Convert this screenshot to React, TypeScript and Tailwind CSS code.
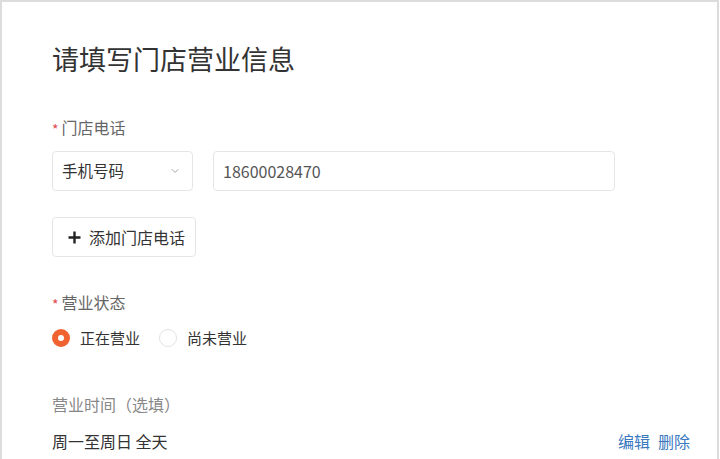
import { ChevronDown } from "lucide-react";

const font = { fontFamily: '"Noto Sans CJK SC", "Noto Sans", sans-serif' };

function Label({ text, required }: { text: string; required?: boolean }) {
  return (
    <div className="flex items-center text-[16px] leading-[24px] text-[#666]">
      {required && <span className="relative top-[2px] mr-[3px] text-[14px] text-[#e5484d]">*</span>}
      {text}
    </div>
  );
}

function Radio({ checked, label }: { checked?: boolean; label: string }) {
  return (
    <label className="flex items-center gap-[10px] text-[15px] leading-[24px] text-[#333]">
      <span
        className={`inline-block h-[18px] w-[18px] rounded-full ${
          checked ? "border-[6px] border-[#f0622f] bg-white" : "border border-[#e3e3e3] bg-white"
        }`}
      />
      {label}
    </label>
  );
}

export default function App() {
  return (
    <div className="min-h-[459px] w-[720px] bg-white" style={font}>
      <div className="min-h-[459px] w-[719px] border-x-2 border-t-2 border-[#dcdcdc] pl-[50px] pt-[39px]">
        <h1 className="text-[27px] font-normal leading-[36px] text-[#333]">请填写门店营业信息</h1>

        {/* Store phone */}
        <div className="mt-[38px]">
          <Label text="门店电话" required />
        </div>
        <div className="mt-[12px] flex gap-[20px]">
          <div className="flex h-[40px] w-[141px] items-center justify-between rounded-[4px] border border-[#e6e6e6] pl-[9px] pr-[11px] text-[15.5px] text-[#333]">
            手机号码
            <ChevronDown size={12} strokeWidth={1.5} className="text-[#888]" />
          </div>
          <div className="flex h-[40px] w-[402px] items-center rounded-[4px] border border-[#e6e6e6] px-[9px] text-[16px] text-[#555]">
            18600028470
          </div>
        </div>
        <button
          type="button"
          className="mt-[26px] flex h-[40px] w-[144px] items-center gap-[8px] rounded-[4px] border border-[#e6e6e6] pl-[15px] text-[16px] text-[#333]"
        >
          <svg width="13" height="13" viewBox="0 0 13 13">
            <path d="M6.5 0.5v12M0.5 6.5h12" stroke="#222" strokeWidth="2.4" />
          </svg>
          添加门店电话
        </button>

        {/* Business status */}
        <div className="mt-[33px]">
          <Label text="营业状态" required />
        </div>
        <div className="mt-[12px] flex items-center gap-[19px]">
          <Radio checked label="正在营业" />
          <Radio label="尚未营业" />
        </div>

        {/* Business hours */}
        <div className="mt-[42px] text-[16px] leading-[24px] text-[#888]">营业时间（选填）</div>
        <div className="mt-[13px] flex items-center justify-between pr-[27px] text-[16px] leading-[24px]">
          <span className="text-[#333]">周一至周日 全天</span>
          <span className="flex gap-[8px] text-[#3a78c0]">
            <span>编辑</span>
            <span>删除</span>
          </span>
        </div>
      </div>
    </div>
  );
}
